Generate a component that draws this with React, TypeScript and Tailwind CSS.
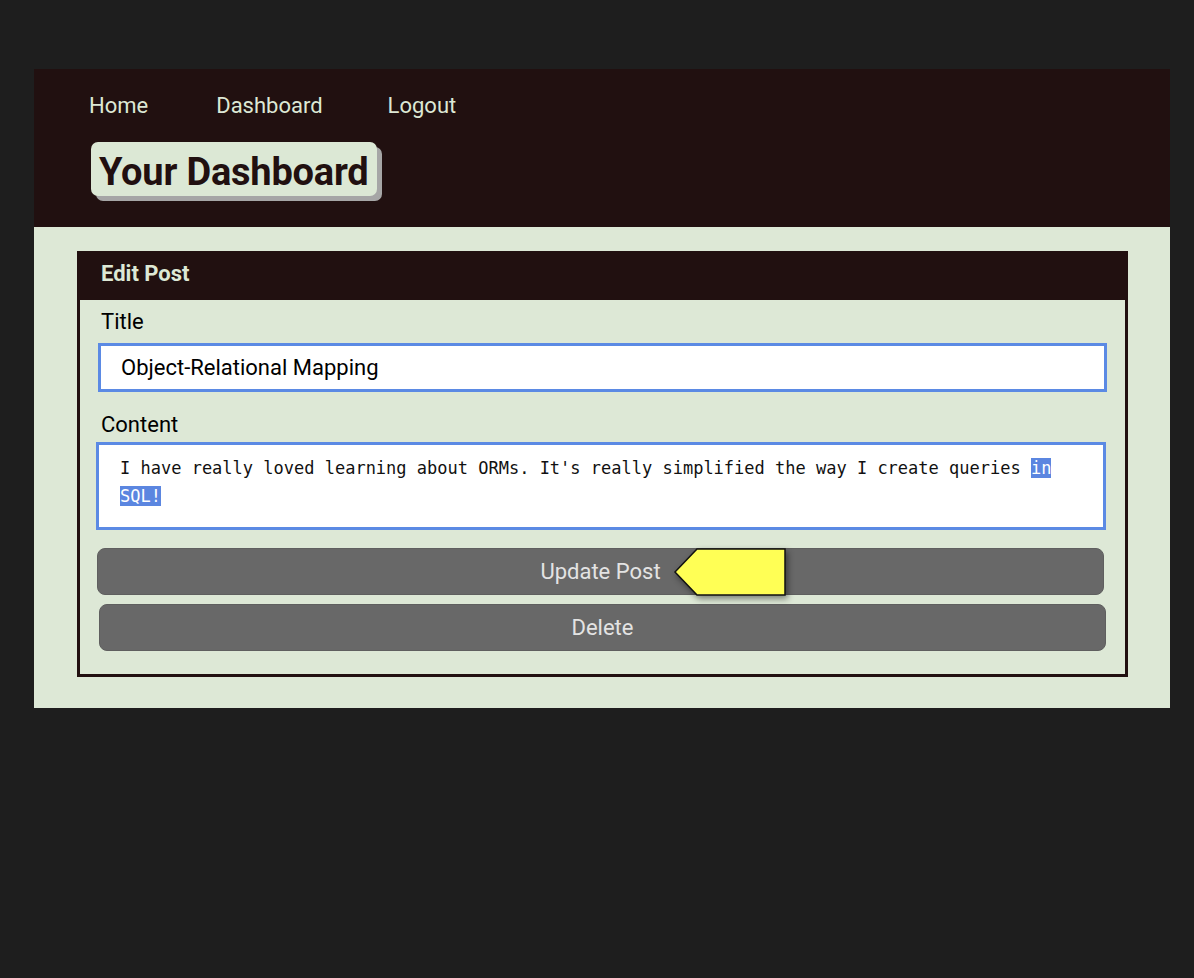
export default function App() {
  return (
    <div className="min-h-screen bg-[#1e1e1e] pt-[69px] px-[34px] font-['Roboto',sans-serif]">
      <div className="w-[1136px]">
        <header className="bg-[#211010] h-[158px] pt-[23px] pl-[55px]">
          <nav className="flex items-center text-[22px] leading-[28px] text-[#dde8d5]">
            <a className="mr-[68px]">Home</a>
            <a className="mr-[65px]">Dashboard</a>
            <a>Logout</a>
          </nav>
          <div className="mt-[22px] ml-[2px] inline-block">
            <h1 className="bg-[#dce8d5] rounded-[7px] px-[8px] pt-[5px] h-[54px] flex items-center text-[38px] font-bold text-[#211010] shadow-[5px_5px_0_#a6a6a6] leading-none tracking-[-0.2px]">
              Your Dashboard
            </h1>
          </div>
        </header>
        <main className="bg-[#dde8d6] pt-[24px] pb-[31px] pl-[43px] pr-[42px]">
          <section className="border-[3px] border-[#211010] bg-[#dde8d6]">
            <div className="bg-[#211010] h-[46px] pt-[7px] pl-[21px] text-[22px] leading-[26px] font-bold text-[#dde8d5]">
              Edit Post
            </div>
            <form className="px-[18px] pt-[10px] pb-[23px] text-black">
              <label className="block pl-[3px] text-[22px] leading-[24px]">Title</label>
              <div className="mt-[9px] h-[49px] border-[3px] border-[#5b8ae4] bg-white flex items-center pl-[20px] text-[22px]">
                Object-Relational Mapping
              </div>
              <label className="block mt-[21px] pl-[3px] text-[22px] leading-[24px]">Content</label>
              <div className="mt-[5px] -ml-[2px] mr-[1px] h-[88px] border-[3px] border-[#5b8ae4] bg-white pt-[9px] pl-[21px] pr-[21px] font-['DejaVu_Sans_Mono',monospace] text-[17px] leading-[28px] text-[#111]">
                I have really loved learning about ORMs. It's really simplified the way I create queries{' '}
                <span className="bg-[#5b86e0] text-white">in SQL!</span>
              </div>
              <div className="relative mt-[18px] -ml-[1px] mr-[3px]">
                <button
                  type="button"
                  className="w-full h-[47px] rounded-[8px] bg-[#686868] text-[#e3e3e3] text-[22px] border border-[#5f5f5f]"
                >
                  Update Post
                </button>
                <svg
                  className="absolute left-[576px] top-0 drop-shadow-[2px_3px_3px_rgba(0,0,0,0.45)]"
                  width="114"
                  height="48"
                  viewBox="0 0 114 48"
                >
                  <polygon
                    points="2,24 24,1 112,1 112,47 24,47"
                    fill="#ffff55"
                    stroke="#111"
                    strokeWidth="1.5"
                  />
                </svg>
              </div>
              <button
                type="button"
                className="block mt-[9px] ml-[1px] w-[1007px] h-[47px] rounded-[8px] bg-[#686868] text-[#e3e3e3] text-[22px] border border-[#5f5f5f]"
              >
                Delete
              </button>
            </form>
          </section>
        </main>
      </div>
    </div>
  );
}
